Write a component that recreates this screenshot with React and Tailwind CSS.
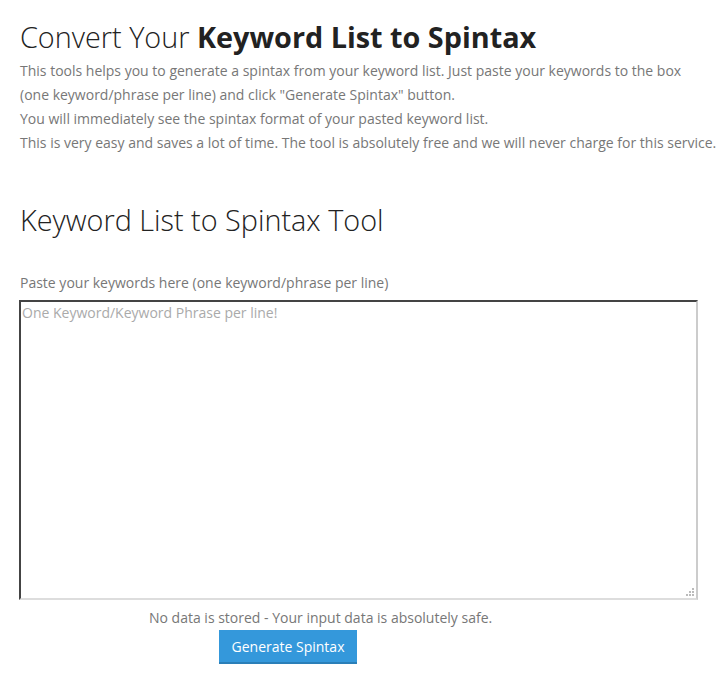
export default function App() {
  return (
    <div className="min-h-screen bg-white pl-[20px] pt-[17px] font-['Open_Sans',sans-serif] text-[#777]">
      <h1 className="text-[28.8px] leading-[40px] font-light text-[#222]">
        Convert Your <span className="font-bold">Keyword List to Spintax</span>
      </h1>
      <div className="mt-[2px] text-[14px] leading-[24px]">
        <p>
          This tools helps you to generate a spintax from your keyword list. Just paste your keywords to the box
          <br />
          (one keyword/phrase per line) and click "Generate Spintax" button.
        </p>
        <p>You will immediately see the spintax format of your pasted keyword list.</p>
        <p className="whitespace-nowrap">
          This is very easy and saves a lot of time. The tool is absolutely free and we will never charge for this service.
        </p>
      </div>
      <h2 className="mt-[45px] text-[28.8px] leading-[40px] font-light text-[#222]">Keyword List to Spintax Tool</h2>
      <label className="mt-[31px] block text-[14px] leading-[24px]">
        Paste your keywords here (one keyword/phrase per line)
      </label>
      {/* textarea with a dotted grip drawn over the corner */}
      <div className="relative -ml-[1px] mt-[5px] w-[679px]">
        <textarea
          className="block h-[300px] w-full resize-none border-2 border-t-[#444] border-l-[#444] border-r-[#ccc] border-b-[#ddd] px-[1px] py-0 text-[14px] leading-[22px] text-[#333] outline-none placeholder:text-[#aaa]"
          placeholder="One Keyword/Keyword Phrase per line!"
        ></textarea>
        <svg className="absolute right-[3px] bottom-[3px]" width="10" height="10" viewBox="0 0 10 10">
          <rect x="7" y="1" width="2" height="2" fill="#bbb" />
          <rect x="4" y="4" width="2" height="2" fill="#bbb" />
          <rect x="7" y="4" width="2" height="2" fill="#bbb" />
          <rect x="1" y="7" width="2" height="2" fill="#bbb" />
          <rect x="4" y="7" width="2" height="2" fill="#bbb" />
          <rect x="7" y="7" width="2" height="2" fill="#bbb" />
        </svg>
      </div>
      <p className="mt-[8px] ml-[129px] text-[14px] leading-[20px]">
        No data is stored - Your input data is absolutely safe.
      </p>
      <button className="mt-[2px] ml-[199px] block h-[34px] w-[138px] border-b-2 border-[#2a7fb8] bg-[#3498db] text-[14px] text-white">
        Generate Spintax
      </button>
    </div>
  );
}
